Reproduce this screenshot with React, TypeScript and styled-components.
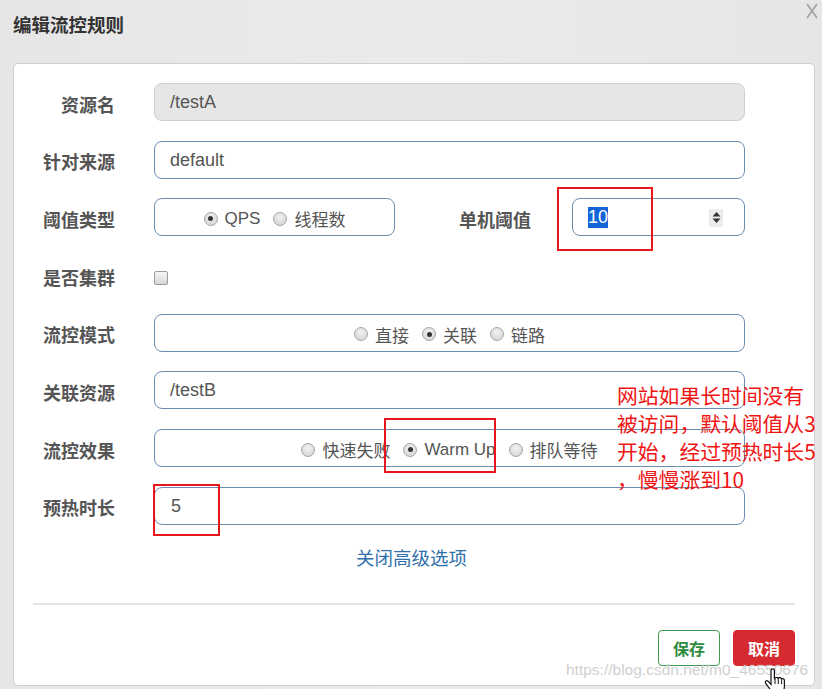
import styled, { createGlobalStyle } from 'styled-components';

const GlobalStyle = createGlobalStyle`
  html, body {
    margin: 0;
    padding: 0;
    background: #e9e9e9;
  }
  body {
    font-family: 'Liberation Sans', 'Noto Sans CJK SC', Arial, sans-serif;
  }
`;

interface RadioOption {
  label: string;
  checked?: boolean;
}

const Radios: React.FC<{ options: RadioOption[] }> = ({ options }) => (
  <>
    {options.map((o) => (
      <RadioItem key={o.label}>
        <RadioDot $checked={!!o.checked} />
        {o.label}
      </RadioItem>
    ))}
  </>
);

const App = () => {
  return (
    <Page>
      <GlobalStyle />
      <Header>
        <Title>编辑流控规则</Title>
        <CloseButton aria-label="close">
          <svg width="12" height="16" viewBox="0 0 12 16">
            <path d="M1 1 L11 15 M11 1 L1 15" stroke="#a8a8a8" strokeWidth="2" fill="none" />
          </svg>
        </CloseButton>
      </Header>

      <Panel>
        <Form>
          <Label>资源名</Label>
          <TextInput $disabled>/testA</TextInput>

          <Label>针对来源</Label>
          <TextInput>default</TextInput>

          <Label>阈值类型</Label>
          <SplitRow>
            <RadioBox $width={241}>
              <Radios options={[{ label: 'QPS', checked: true }, { label: '线程数' }]} />
            </RadioBox>
            <InlineLabel>单机阈值</InlineLabel>
            <NumberInput>
              <Selected>10</Selected>
              <Spinner>
                <svg width="9" height="13" viewBox="0 0 9 13">
                  <path d="M4.5 1 L8.5 5.5 L0.5 5.5 Z M4.5 12 L8.5 7.5 L0.5 7.5 Z" fill="#333" />
                </svg>
              </Spinner>
            </NumberInput>
          </SplitRow>

          <Label>是否集群</Label>
          <CheckCell>
            <CheckBox />
          </CheckCell>

          <Label>流控模式</Label>
          <RadioBox>
            <Radios options={[{ label: '直接' }, { label: '关联', checked: true }, { label: '链路' }]} />
          </RadioBox>

          <Label>关联资源</Label>
          <TextInput>/testB</TextInput>

          <Label>流控效果</Label>
          <RadioBox>
            <Radios
              options={[{ label: '快速失败' }, { label: 'Warm Up', checked: true }, { label: '排队等待' }]}
            />
          </RadioBox>

          <Label>预热时长</Label>
          <TextInput $pad={16}>5</TextInput>
        </Form>

        <LinkRow>
          <ToggleLink>关闭高级选项</ToggleLink>
        </LinkRow>

        <Footer>
          <Divider />
          <ButtonRow>
            <Button $variant="save">保存</Button>
            <Button $variant="cancel">取消</Button>
          </ButtonRow>
        </Footer>
      </Panel>

      <RedBox style={{ left: 557, top: 187, width: 96, height: 64 }} />
      <RedBox style={{ left: 384, top: 418, width: 112, height: 55 }} />
      <RedBox style={{ left: 153, top: 484, width: 67, height: 52 }} />

      <Note>
        网站如果长时间没有
        <br />
        被访问，默认阈值从3
        <br />
        开始，经过预热时长5
        <br />
        ，慢慢涨到10
      </Note>

      <Watermark>https://blog.csdn.net/m0_46550676</Watermark>

      <Cursor>
        <svg width="24" height="28" viewBox="0 0 24 28">
          <path
            d="M7 2.5c0-1 .8-1.7 1.7-1.7s1.7.7 1.7 1.7v8.3l.4-.1c.2-.9 1-1.5 1.8-1.4.8 0 1.4.6 1.6 1.3.3-.7 1-1.1 1.8-1 .8.1 1.4.7 1.5 1.5.4-.4 1-.6 1.6-.4.8.2 1.3.9 1.3 1.7v6.2c0 3.7-2.6 6.6-6.2 6.6h-2.2c-2.2 0-3.6-.9-4.9-2.6L1.7 15.3c-.6-.8-.5-1.9.3-2.4.7-.5 1.7-.3 2.3.4L7 16.4z"
            fill="#fff"
            stroke="#111"
            strokeWidth="1.2"
          />
          <path d="M11 11v5 M14.3 11.5v4.5 M17.6 12.2v4" stroke="#111" strokeWidth="1" />
        </svg>
      </Cursor>
    </Page>
  );
};

export default App;

const Page = styled.div`
  position: relative;
  width: 822px;
  height: 689px;
  overflow: hidden;
  background: linear-gradient(90deg, #e6e6e6 0%, #ebebeb 50%, #e6e6e6 100%);
`;

const Header = styled.div`
  height: 63px;
  display: flex;
  align-items: flex-start;
  justify-content: space-between;
  padding: 0 4px 0 13px;
  box-sizing: border-box;
`;

const Title = styled.h1`
  margin: 12px 0 0;
  font-family: 'Noto Sans CJK SC', sans-serif;
  font-size: 18.5px;
  line-height: 24px;
  font-weight: 700;
  color: #333;
`;

const CloseButton = styled.button`
  margin-top: 3px;
  padding: 0;
  border: none;
  background: none;
  display: flex;
`;

const Panel = styled.div`
  margin-left: 13px;
  width: 802px;
  height: 623px;
  box-sizing: border-box;
  background: #fff;
  border: 1px solid #cfcfcf;
  border-radius: 5px;
  display: flex;
  flex-direction: column;
`;

const Form = styled.div`
  display: grid;
  grid-template-columns: 81px 1fr;
  column-gap: 39px;
  row-gap: 19.7px;
  padding: 19px 69px 0 20px;
`;

const Label = styled.div`
  height: 38px;
  box-sizing: border-box;
  padding-top: 3px;
  display: flex;
  align-items: center;
  justify-content: flex-end;
  font-family: 'Noto Sans CJK SC', sans-serif;
  font-size: 18px;
  font-weight: 700;
  color: #555;
  white-space: nowrap;
`;

const InlineLabel = styled(Label)`
  margin-left: 64px;
`;

const TextInput = styled.div<{ $disabled?: boolean; $pad?: number }>`
  height: 38px;
  box-sizing: border-box;
  display: flex;
  align-items: center;
  padding-left: ${({ $pad }) => $pad ?? 15}px;
  padding-top: 1px;
  font-size: 18px;
  color: #555;
  border-radius: 8px;
  border: ${({ $disabled }) => ($disabled ? '1.5px solid #cfcfcf' : '1.5px solid #6a8db0')};
  background: ${({ $disabled }) => ($disabled ? '#e6e6e6' : '#fff')};
`;

const SplitRow = styled.div`
  display: flex;
  align-items: center;
`;

const RadioBox = styled.div<{ $width?: number }>`
  height: 38px;
  box-sizing: border-box;
  padding-top: 3px;
  ${({ $width }) => ($width ? `width: ${$width}px;` : '')}
  display: flex;
  align-items: center;
  justify-content: center;
  gap: 13px;
  border: 1.5px solid #6a8db0;
  border-radius: 8px;
  background: #fff;
`;

const RadioItem = styled.label`
  display: flex;
  align-items: center;
  gap: 7px;
  font-family: 'Liberation Sans', 'Noto Sans CJK SC', sans-serif;
  font-size: 17px;
  color: #555;
`;

const RadioDot = styled.span<{ $checked: boolean }>`
  position: relative;
  width: 14px;
  height: 14px;
  box-sizing: border-box;
  border-radius: 50%;
  border: 1px solid #a5a5a5;
  background: radial-gradient(circle at 50% 35%, #f2f2f2 0%, #cfcfcf 100%);
  &::after {
    content: '';
    display: ${({ $checked }) => ($checked ? 'block' : 'none')};
    position: absolute;
    left: 3.5px;
    top: 3.5px;
    width: 5px;
    height: 5px;
    border-radius: 50%;
    background: #333;
  }
`;

const NumberInput = styled.div`
  margin-left: auto;
  width: 173px;
  height: 38px;
  box-sizing: border-box;
  display: flex;
  align-items: center;
  justify-content: space-between;
  padding: 1px 21px 0 15px;
  border: 1.5px solid #6a8db0;
  border-radius: 8px;
  font-size: 18px;
  color: #555;
`;

const Selected = styled.span`
  background: #1565d8;
  color: #fff;
  line-height: 21px;
`;

const Spinner = styled.span`
  width: 14px;
  height: 18px;
  display: flex;
  align-items: center;
  justify-content: center;
  background: #ececec;
`;

const CheckCell = styled.div`
  height: 38px;
  display: flex;
  align-items: center;
  padding-top: 6px;
  box-sizing: border-box;
`;

const CheckBox = styled.span`
  width: 14px;
  height: 14px;
  box-sizing: border-box;
  border: 1px solid #9a9a9a;
  border-radius: 2px;
  background: linear-gradient(#f6f6f6, #d8d8d8);
`;

const LinkRow = styled.div`
  display: flex;
  justify-content: center;
  margin-top: 20px;
  padding-right: 5px;
`;

const ToggleLink = styled.a`
  font-family: 'Noto Sans CJK SC', sans-serif;
  font-size: 18.5px;
  line-height: 24px;
  color: #2f6fab;
  cursor: pointer;
`;

const Footer = styled.div`
  margin-top: auto;
  padding: 0 19px 19px 19px;
`;

const Divider = styled.hr`
  margin: 0;
  border: none;
  border-top: 2px solid #e4e4e4;
`;

const ButtonRow = styled.div`
  display: flex;
  justify-content: flex-end;
  gap: 13px;
  margin-top: 25px;
`;

const Button = styled.button<{ $variant: 'save' | 'cancel' }>`
  width: 62px;
  height: 36px;
  border-radius: 4px;
  font-family: 'Noto Sans CJK SC', sans-serif;
  font-size: 16px;
  font-weight: 700;
  border: 1.5px solid ${({ $variant }) => ($variant === 'save' ? '#3f9b4f' : '#d2262d')};
  background: ${({ $variant }) => ($variant === 'save' ? '#fff' : '#d42a30')};
  color: ${({ $variant }) => ($variant === 'save' ? '#2f8a3e' : '#fff')};
`;

const RedBox = styled.div`
  position: absolute;
  box-sizing: border-box;
  border: 2px solid #e8161c;
`;

const Note = styled.div`
  position: absolute;
  left: 617px;
  top: 381px;
  font-family: 'Noto Sans CJK SC', sans-serif;
  font-size: 20.8px;
  line-height: 28px;
  color: #f01414;
  white-space: nowrap;
`;

const Watermark = styled.div`
  position: absolute;
  left: 566px;
  top: 661px;
  font-family: 'Liberation Sans', sans-serif;
  font-size: 15.5px;
  color: rgba(190, 190, 190, 0.75);
  text-shadow: 0 0 1px rgba(255, 255, 255, 0.9);
  white-space: nowrap;
`;

const Cursor = styled.div`
  position: absolute;
  left: 764px;
  top: 668px;
  display: flex;
`;
